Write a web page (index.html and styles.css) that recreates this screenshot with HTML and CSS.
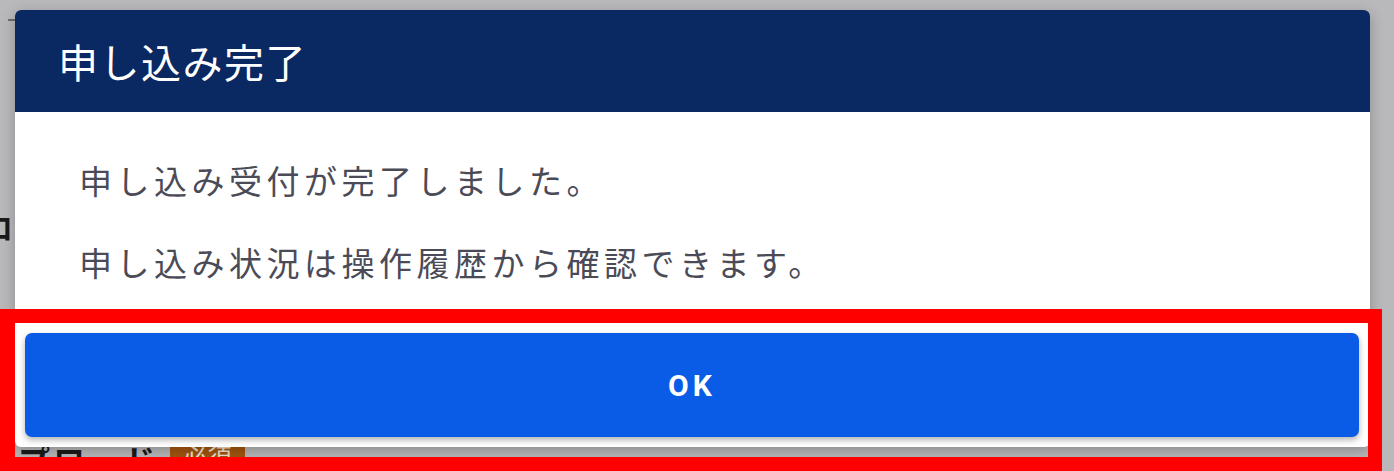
FILE: index.html
```html
<!DOCTYPE html>
<html lang="ja">
<head>
    <meta charset="UTF-8">
    <meta name="viewport" content="width=device-width, initial-scale=1.0">
    <title>申し込み完了</title>
    <link rel="stylesheet" href="styles.css">
</head>
<body>

    <!-- Page behind the overlay -->
    <div class="page">
        <div class="page-rule"></div>
        <div class="page-heading">ロ</div>
        <div class="page-field">
            <span class="field-label">アップロード</span>
            <span class="field-tag">必須</span>
        </div>
    </div>

    <!-- Dialog -->
    <div class="dialog">
        <div class="dialog-header">
            <h2 class="dialog-title">申し込み完了</h2>
        </div>
        <div class="dialog-body">
            <p>申し込み受付が完了しました。</p>
            <p>申し込み状況は操作履歴から確認できます。</p>
        </div>
        <div class="dialog-actions">
            <button class="btn-ok">OK</button>
        </div>
    </div>

    <!-- Highlight frame -->
    <div class="highlight"></div>

</body>
</html>
```

FILE: styles.css
```css
/* Global Styles */
body {
    margin: 0;
    padding: 0;
    width: 1394px;
    height: 471px;
    overflow: hidden;
    position: relative;
    background: #b9b9bb;
    font-family: "Noto Sans CJK JP", "Noto Sans", sans-serif;
}

/* Page behind the dialog */
.page {
    height: 471px;
}

.page-rule {
    margin: 19px 0 0 8px;
    width: 80px;
    height: 2px;
    background: #6d6d70;
}

.page-heading {
    margin: 190px 0 0 -17px;
    font-size: 30px;
    font-weight: bold;
    line-height: 30px;
    color: #1a1a1a;
}

.page-field {
    margin-top: 198px;
    display: flex;
    align-items: flex-start;
    gap: 12px;
}

.field-label {
    margin-left: -52px;
    margin-top: 4px;
    font-size: 32px;
    font-weight: bold;
    line-height: 32px;
    letter-spacing: 3px;
    color: #1a1a1a;
}

.field-tag {
    width: 75px;
    height: 30px;
    background: #a3560f;
    color: #f3e3d0;
    font-size: 24px;
    line-height: 34px;
    text-align: center;
}

/* Dialog */
.dialog {
    position: absolute;
    left: 15px;
    top: 10px;
    width: 1355px;
    height: 437px;
    background: #ffffff;
    border-radius: 6px;
    overflow: hidden;
    display: flex;
    flex-direction: column;
    box-shadow: 0 4px 14px rgba(0, 0, 0, 0.25);
}

.dialog-header {
    height: 102px;
    flex-shrink: 0;
    background: #0a2862;
    display: flex;
    align-items: center;
    padding: 0 43px;
}

.dialog-title {
    margin: 0;
    font-size: 40px;
    font-weight: normal;
    color: #ffffff;
    letter-spacing: 1.5px;
}

.dialog-body {
    flex: 1;
    padding: 43px 0 0 64px;
    display: flex;
    flex-direction: column;
    gap: 32px;
}

.dialog-body p {
    margin: 0;
    font-size: 33px;
    line-height: 50px;
    letter-spacing: 4.5px;
    color: #4b4b57;
}

.dialog-actions {
    padding: 10px 11px 10px 10px;
}

.btn-ok {
    display: block;
    width: 100%;
    height: 104px;
    border: none;
    border-radius: 7px;
    background: #0a5be6;
    color: #ffffff;
    font-family: Roboto, "Noto Sans", sans-serif;
    font-size: 30px;
    font-weight: bold;
    letter-spacing: 4px;
    box-shadow: 0 3px 6px rgba(0, 0, 0, 0.3);
    cursor: pointer;
}

/* Red annotation frame */
.highlight {
    position: absolute;
    left: 0;
    top: 309px;
    width: 1353px;
    height: 134px;
    border: solid #ff0000;
    border-width: 14px 14px 14px 15px;
}
```
